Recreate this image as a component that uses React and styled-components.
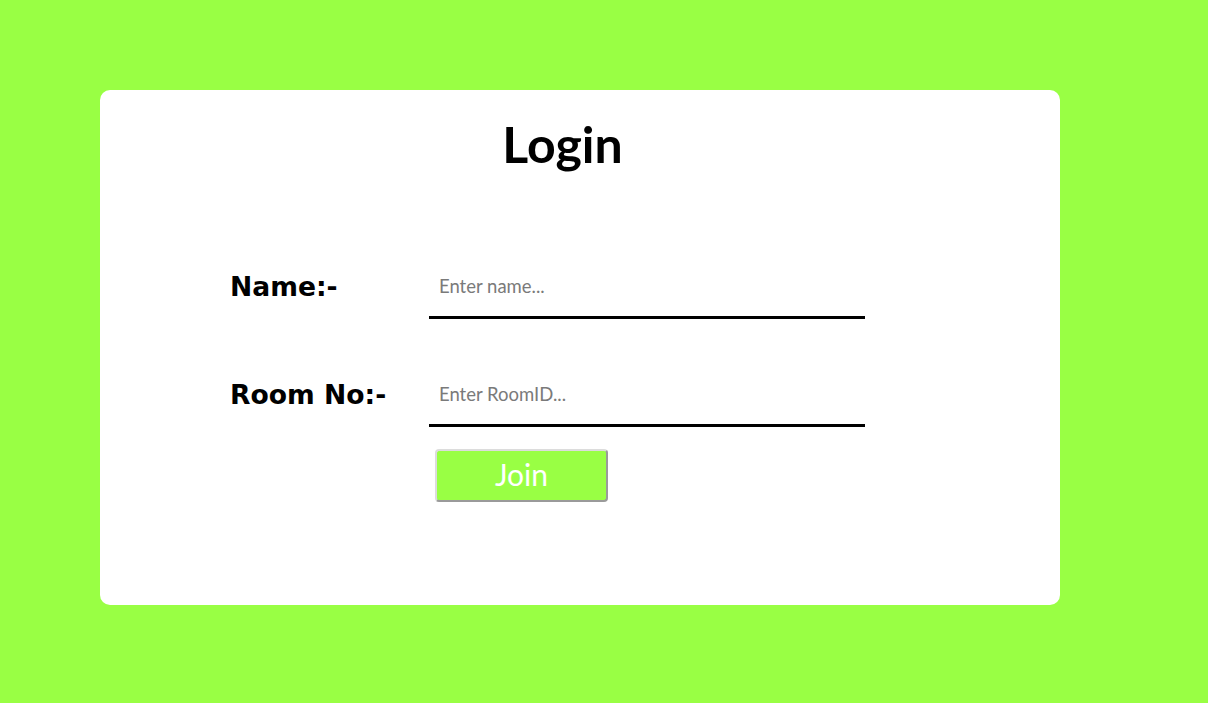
import styled, { createGlobalStyle } from 'styled-components';

const GlobalStyle = createGlobalStyle`
  html, body {
    margin: 0;
    padding: 0;
    background: #99ff44;
  }
`;

const Page = styled.div`
  min-height: 703px;
  padding: 90px 0 0 100px;
  box-sizing: border-box;
`;

const Card = styled.div`
  width: 960px;
  height: 515px;
  background: #ffffff;
  border-radius: 10px;
  padding-top: 24px;
  box-sizing: border-box;
`;

const Title = styled.h1`
  margin: 0;
  padding-right: 35px;
  text-align: center;
  font-family: Lato, 'Noto Sans', sans-serif;
  font-weight: 700;
  font-size: 50px;
  line-height: 60px;
  color: #000;
`;

const Form = styled.form`
  display: grid;
  grid-template-columns: 198px 437px;
  row-gap: 50px;
  align-items: center;
  padding-left: 130px;
  margin-top: 87px;
`;

const Label = styled.label`
  font-family: 'DejaVu Sans', Verdana, sans-serif;
  font-weight: 700;
  font-size: 26.6px;
  color: #000;
  padding-bottom: 8px;
`;

const Input = styled.input`
  height: 58px;
  box-sizing: border-box;
  border: none;
  border-bottom: 3px solid #000;
  outline: none;
  padding: 0 10px 6px;
  margin-left: 1px;
  font-family: Lato, 'Noto Sans', sans-serif;
  font-size: 18.5px;
  color: #333;
  background: transparent;

  &::placeholder {
    color: #7a7a7a;
  }
`;

const Actions = styled.div`
  grid-column: 2;
  margin-top: -28px;
  padding-left: 7px;
`;

const JoinButton = styled.button`
  width: 173px;
  height: 53px;
  box-sizing: border-box;
  background: #99ff44;
  color: #ffffff;
  font-family: Lato, 'Noto Sans', sans-serif;
  font-size: 30px;
  line-height: 1;
  padding: 0 0 3px;
  border-style: solid;
  border-width: 2px;
  border-color: #dcdcdc #9a9a9a #9a9a9a #dcdcdc;
  border-radius: 4px;
  cursor: pointer;
`;

export default function App() {
  return (
    <>
      <GlobalStyle />
      <Page>
        <Card>
          <Title>Login</Title>
          <Form onSubmit={e => e.preventDefault()}>
            <Label htmlFor="name">Name:-</Label>
            <Input id="name" placeholder="Enter name..." />
            <Label htmlFor="room">Room No:-</Label>
            <Input id="room" placeholder="Enter RoomID..." />
            <Actions>
              <JoinButton type="submit">Join</JoinButton>
            </Actions>
          </Form>
        </Card>
      </Page>
    </>
  );
}
